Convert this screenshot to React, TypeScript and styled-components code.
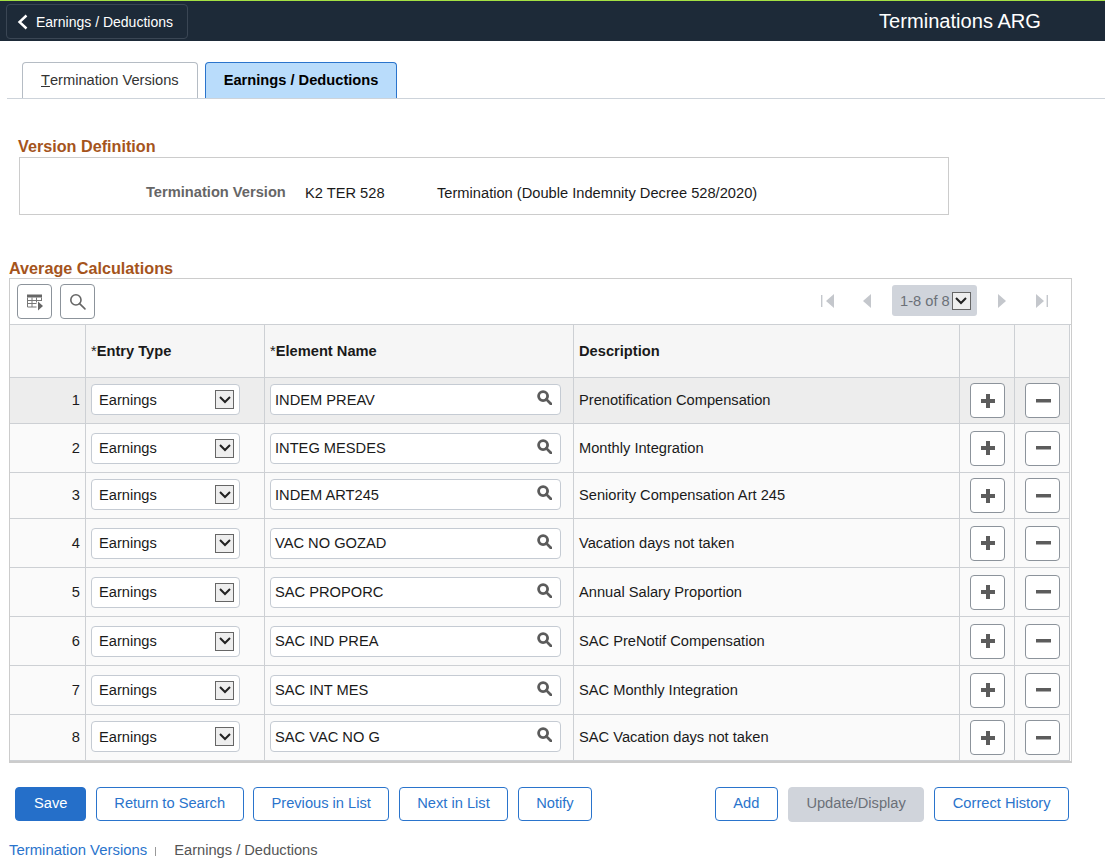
import { FC } from "react";
import styled, { createGlobalStyle } from "styled-components";

const rows = [
  { no: 1, name: "INDEM PREAV", description: "Prenotification Compensation", height: 46 },
  { no: 2, name: "INTEG MESDES", description: "Monthly Integration", height: 49 },
  { no: 3, name: "INDEM ART245", description: "Seniority Compensation Art 245", height: 46 },
  { no: 4, name: "VAC NO GOZAD", description: "Vacation days not taken", height: 49 },
  { no: 5, name: "SAC PROPORC", description: "Annual Salary Proportion", height: 49 },
  { no: 6, name: "SAC IND PREA", description: "SAC PreNotif Compensation", height: 49 },
  { no: 7, name: "SAC INT MES", description: "SAC Monthly Integration", height: 49 },
  { no: 8, name: "SAC VAC NO G", description: "SAC Vacation days not taken", height: 46 },
];

const SearchGlyph: FC<{ size: number; weight: number; color: string }> = ({ size, weight, color }) => (
  <svg width={size} height={size} viewBox="0 0 16 16" fill="none" stroke={color} strokeWidth={weight}>
    <circle cx="6.500" cy="6.500" r="4.800" />
    <path d="M10 10l5 5" strokeLinecap="round" />
  </svg>
);

const Chevron: FC = () => (
  <svg width="12" height="8" viewBox="0 0 12 8" fill="none" stroke="#222" strokeWidth="2">
    <path d="M1 1l5 5 5-5" />
  </svg>
);

const App: FC = () => {
  return (
    <Page>
      <GlobalStyle />
      <TopBar>
        <BackButton>
          <svg width="11" height="16" viewBox="0 0 11 16" fill="none" stroke="#fff" strokeWidth="2.400">
            <path d="M9.500 1.500L2.500 8l7 6.500" />
          </svg>
          Earnings / Deductions
        </BackButton>
        <PageTitle>Terminations ARG</PageTitle>
      </TopBar>

      <Tabs>
        <Tab>
          <u>T</u>ermination Versions
        </Tab>
        <Tab $active>Earnings / Deductions</Tab>
      </Tabs>

      <VersionHeading>Version Definition</VersionHeading>
      <VersionBox>
        <VersionLabel>Termination Version</VersionLabel>
        <VersionCode>K2 TER 528</VersionCode>
        <span>Termination (Double Indemnity Decree 528/2020)</span>
      </VersionBox>

      <GridHeading>Average Calculations</GridHeading>
      <GridBox>
        <Toolbar>
          <ToolButton>
            <svg width="18" height="18" viewBox="0 0 18 18">
              <path d="M1 1.500h15v3H1z" fill="#666" />
              <path
                d="M1.500 4.500v9.500h9M6 4.500v9.500M10.500 4.500v5M15.500 4.500v3.500M1.500 7.500h14M1.500 10.500h9"
                fill="none"
                stroke="#777"
              />
              <path d="M12 8.500l5 4.500-5 4.500z" fill="#666" />
            </svg>
          </ToolButton>
          <ToolButton>
            <SearchGlyph size={17} weight={1.5} color="#666" />
          </ToolButton>
          <Pager>
            <PagerIcon viewBox="0 0 13 14">
              <path d="M0 1h1.400v12H0zM13 0v14L5 7z" />
            </PagerIcon>
            <PagerIcon viewBox="0 0 13 14" $gap={26}>
              <path d="M11 0v14L3 7z" />
            </PagerIcon>
            <PagerPill>
              1-8 of 8
              <PagerSelect>
                <Chevron />
              </PagerSelect>
            </PagerPill>
            <PagerIcon viewBox="0 0 13 14" $gap={20}>
              <path d="M1 0v14l8-7z" />
            </PagerIcon>
            <PagerIcon viewBox="0 0 13 14" $gap={26}>
              <path d="M0 0v14l8-7zM10.600 1H12v12h-1.400z" />
            </PagerIcon>
          </Pager>
        </Toolbar>

        <Table>
          <colgroup>
            <col width={76} />
            <col width={179} />
            <col width={309} />
            <col width={386} />
            <col width={55} />
            <col width={55} />
          </colgroup>
          <thead>
            <tr>
              <HeadCell />
              <HeadCell>
                <Required>*</Required>Entry Type
              </HeadCell>
              <HeadCell>
                <Required>*</Required>Element Name
              </HeadCell>
              <HeadCell>Description</HeadCell>
              <HeadCell />
              <HeadCell />
            </tr>
          </thead>
          <tbody>
            {rows.map((row) => {
              const short = row.height === 46;
              return (
                <Row key={row.no} $height={row.height} $active={row.no === 1}>
                  <NumberCell $short={short}>{row.no}</NumberCell>
                  <Cell $short={short}>
                    <SelectBox>
                      Earnings
                      <SelectArrow>
                        <Chevron />
                      </SelectArrow>
                    </SelectBox>
                  </Cell>
                  <Cell $short={short}>
                    <InputBox>
                      {row.name}
                      <SearchGlyph size={15} weight={3} color="#5b5b5b" />
                    </InputBox>
                  </Cell>
                  <Cell $short={short}>{row.description}</Cell>
                  <ActionCell>
                    <ActionButton>
                      <svg width="16" height="16" viewBox="0 0 16 16" fill="#5c5c5c">
                        <path d="M6 1h4v5h5v4h-5v5H6v-5H1V6h5z" />
                      </svg>
                    </ActionButton>
                  </ActionCell>
                  <ActionCell>
                    <ActionButton>
                      <svg width="16" height="16" viewBox="0 0 16 16" fill="#5c5c5c">
                        <path d="M1 6h15v3.500H1z" />
                      </svg>
                    </ActionButton>
                  </ActionCell>
                </Row>
              );
            })}
          </tbody>
        </Table>
      </GridBox>

      <Footer>
        <ButtonGroup $gap={9.4}>
          <Button $primary>Save</Button>
          <Button>Return to Search</Button>
          <Button>Previous in List</Button>
          <Button>Next in List</Button>
          <Button>Notify</Button>
        </ButtonGroup>
        <ButtonGroup $gap={10}>
          <Button>Add</Button>
          <Button $disabled>Update/Display</Button>
          <Button>Correct History</Button>
        </ButtonGroup>
      </Footer>

      <Breadcrumb>
        <BreadcrumbLink>Termination Versions</BreadcrumbLink>
        <BreadcrumbBar />
        <span>Earnings / Deductions</span>
      </Breadcrumb>
    </Page>
  );
};

/** Styled Components */
const GlobalStyle = createGlobalStyle`
  html, body {
    margin: 0;
    padding: 0;
    background: #fff;
    overflow: hidden;
  }
  * {
    box-sizing: border-box;
  }
`;

const Page = styled.div`
  width: 1105px;
  height: 866px;
  font-family: "Liberation Sans", Arial, sans-serif;
  font-size: 14.67px;
  color: #1a1a1a;
`;

const TopBar = styled.header`
  height: 41px;
  background-color: #1d2a38;
  border-top: 1px solid #a4e043;
  display: flex;
  justify-content: space-between;
  align-items: flex-end;
  padding: 0 64px 0 6px;
`;

const BackButton = styled.div`
  width: 182px;
  height: 35px;
  display: flex;
  align-items: center;
  gap: 8px;
  padding: 0 0 0 10px;
  margin-bottom: 2px;
  border: 1px solid #3a4654;
  border-radius: 4px;
  color: #fff;
  font-size: 14px;
`;

const PageTitle = styled.div`
  color: #fff;
  font-size: 20.1px;
  line-height: 40px;
`;

const Tabs = styled.nav`
  height: 58px;
  margin-left: 7px;
  padding: 21px 0 0 15px;
  display: flex;
  gap: 7px;
  border-bottom: 1px solid #cdd3da;
`;

const Tab = styled.div<{ $active?: boolean }>`
  height: 36px;
  padding: 0 18px 2px;
  display: flex;
  align-items: center;
  justify-content: center;
  white-space: pre;
  border: 1px solid ${({ $active }) => ($active ? "#2a74cc" : "#b5bcc4")};
  border-bottom: none;
  border-radius: 4px 4px 0 0;
  background-color: ${({ $active }) => ($active ? "#b9dcfb" : "#fff")};
  font-weight: ${({ $active }) => ($active ? "bold" : "normal")};
  color: ${({ $active }) => ($active ? "#000" : "#333")};
`;

const SectionHeading = styled.h2`
  margin: 0;
  font-size: 16.2px;
  line-height: 18px;
  font-weight: bold;
  color: #a5541c;
`;

const VersionHeading = styled(SectionHeading)`
  margin: 38px 0 0 18px;
`;

const VersionBox = styled.section`
  width: 930px;
  height: 58px;
  margin: 2px 0 0 19px;
  padding: 14px 0 0 126px;
  display: flex;
  align-items: center;
  border: 1px solid #ccc;
`;

const VersionLabel = styled.span`
  width: 159px;
  font-weight: bold;
  color: #666;
  padding-bottom: 2px;
`;

const VersionCode = styled.span`
  width: 132px;
`;

const GridHeading = styled(SectionHeading)`
  margin: 44px 0 0 9px;
`;

const GridBox = styled.section`
  width: 1063px;
  margin: 1px 0 0 9px;
  border: 1px solid #ccc;
  border-bottom: 2px solid #ccc;
`;

const Toolbar = styled.div`
  height: 46px;
  padding: 5px 0 0 7px;
  display: flex;
  gap: 8px;
  border-bottom: 1px solid #cdd0d4;
`;

const ToolButton = styled.div`
  width: 35px;
  height: 35px;
  display: flex;
  align-items: center;
  justify-content: center;
  border: 1px solid #8c939b;
  border-radius: 4px;
  background: #fff;
`;

const Pager = styled.div`
  margin-left: auto;
  padding-right: 22px;
  height: 31px;
  margin-top: 1px;
  display: flex;
  align-items: center;
`;

const PagerIcon = styled.svg<{ $gap?: number }>`
  width: 13px;
  height: 14px;
  margin-left: ${({ $gap }) => $gap ?? 0}px;
  fill: #c4c7cc;
`;

const PagerPill = styled.div`
  width: 85px;
  height: 31px;
  margin-left: 19px;
  padding-left: 8px;
  display: flex;
  align-items: center;
  gap: 2px;
  background-color: #d0d4db;
  border-radius: 3px;
  color: #6b7078;
`;

const PagerSelect = styled.span`
  width: 19px;
  height: 18px;
  display: flex;
  align-items: center;
  justify-content: center;
  background: #eee;
  border: 1px solid #666;
`;

const Table = styled.table`
  width: 1060px;
  table-layout: fixed;
  border-collapse: separate;
  border-spacing: 0;
`;

const HeadCell = styled.th`
  height: 53px;
  padding: 0 5px;
  text-align: left;
  font-size: 14.67px;
  font-weight: bold;
  color: #1a1a1a;
  background-color: #f6f6f6;
  border-right: 1px solid #cdd0d4;
  border-bottom: 1px solid #cdd0d4;
`;

const Required = styled.span`
  font-weight: normal;
`;

const Row = styled.tr<{ $height: number; $active?: boolean }>`
  height: ${({ $height }) => $height}px;
  background-color: ${({ $active }) => ($active ? "#ededed" : "#fafafa")};
`;

const Cell = styled.td<{ $short?: boolean }>`
  padding: 0 5px ${({ $short }) => ($short ? 2 : 0)}px;
  border-right: 1px solid #cdd0d4;
  border-bottom: 1px solid #cdd0d4;
`;

const NumberCell = styled(Cell)`
  text-align: right;
`;

const ActionCell = styled(Cell)`
  padding: 0 0 0 10px;
`;

const SelectBox = styled.div`
  width: 149px;
  height: 31px;
  padding: 0 5px 0 7px;
  display: flex;
  align-items: center;
  justify-content: space-between;
  background: #fff;
  border: 1px solid #c5cbd3;
  border-radius: 4px;
`;

const SelectArrow = styled.span`
  width: 19px;
  height: 19px;
  display: flex;
  align-items: center;
  justify-content: center;
  background: #eee;
  border: 1px solid #666;
`;

const InputBox = styled.div`
  width: 291px;
  height: 31px;
  padding: 0 8px 0 4px;
  display: flex;
  align-items: center;
  justify-content: space-between;
  background: #fff;
  border: 1px solid #c5cbd3;
  border-radius: 4px;

  svg {
    margin-bottom: 4px;
  }
`;

const ActionButton = styled.div`
  width: 35px;
  height: 35px;
  display: flex;
  align-items: center;
  justify-content: center;
  background: #fff;
  border: 1px solid #8c939b;
  border-radius: 4px;
`;

const Footer = styled.div`
  margin-top: 24px;
  padding: 0 36px 0 15px;
  display: flex;
  justify-content: space-between;
`;

const ButtonGroup = styled.div<{ $gap: number }>`
  display: flex;
  gap: ${({ $gap }) => $gap}px;
`;

const Button = styled.div<{ $primary?: boolean; $disabled?: boolean }>`
  height: ${({ $disabled }) => ($disabled ? 35 : 34)}px;
  padding: 0 ${({ $primary }) => ($primary ? 18 : 17.5)}px 3px;
  display: flex;
  align-items: center;
  border-radius: 4px;
  border: 1px solid ${({ $primary, $disabled }) => ($disabled ? "#d0d4db" : $primary ? "#256fc9" : "#2a74cc")};
  background-color: ${({ $primary, $disabled }) => ($disabled ? "#d0d4db" : $primary ? "#256fc9" : "#fff")};
  color: ${({ $primary, $disabled }) => ($disabled ? "#6b7078" : $primary ? "#fff" : "#2a74cc")};
`;

const Breadcrumb = styled.div`
  margin: 20px 0 0 9px;
  display: flex;
  align-items: center;
  color: #555;
`;

const BreadcrumbLink = styled.span`
  color: #2a74cc;
  font-size: 14.9px;
`;

const BreadcrumbBar = styled.span`
  width: 1px;
  height: 9px;
  margin: 2px 18px 0 8px;
  background-color: #999;
`;

export default App;
